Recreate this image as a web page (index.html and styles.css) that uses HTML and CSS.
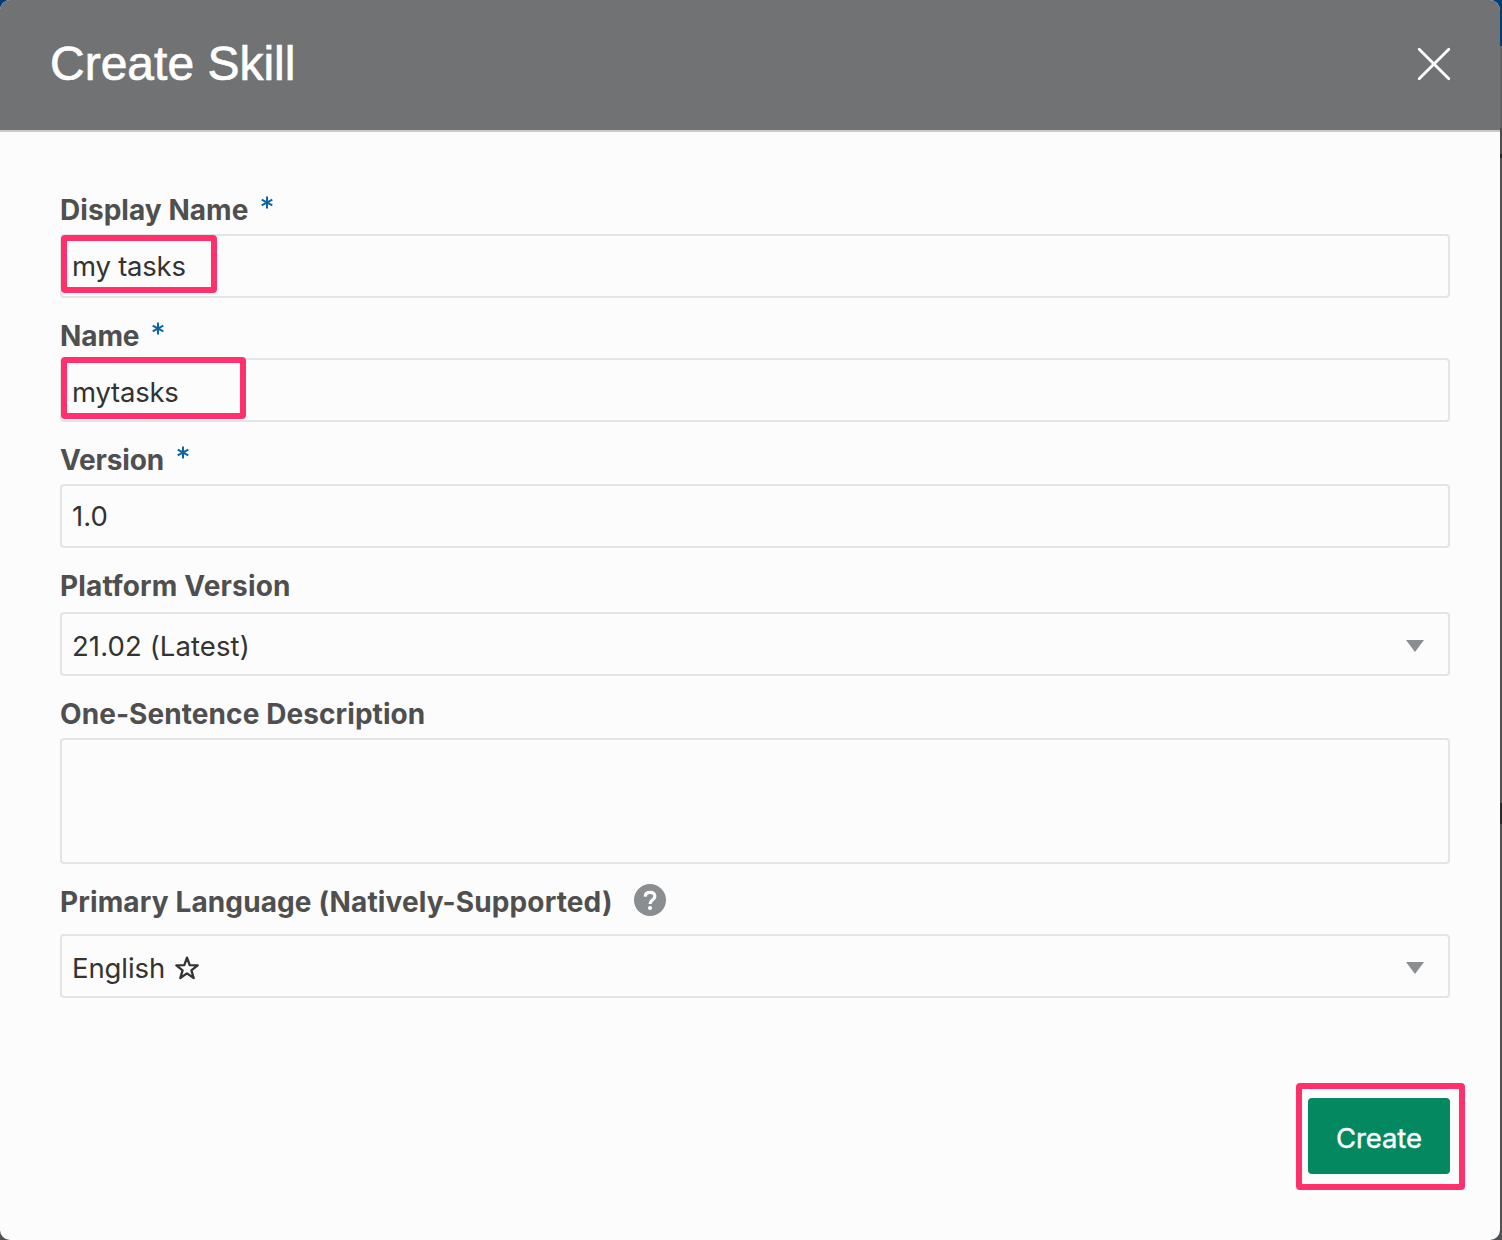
FILE: index.html
```html
<!DOCTYPE html>
<html lang="en">
<head>
<meta charset="utf-8">
<title>Create Skill</title>
<link rel="stylesheet" href="styles.css">
</head>
<body>
<main class="dialog">
  <header class="dialog-header">
    <h1 class="dialog-title">Create Skill</h1>
    <svg class="close" viewBox="0 0 36 36" role="img" aria-label="Close"><path d="M3.2 3.2 32.8 32.8M32.8 3.2 3.2 32.8"/></svg>
  </header>
  <form class="form">
    <section class="field field-display">
      <div class="label"><span class="t-display">Display Name</span><svg class="req" viewBox="0 0 12 13"><path d="M6 .5v12M.7 3.6l10.6 5.8M11.3 3.6.7 9.4"/></svg></div>
      <div class="control"><span class="t-tasks">my tasks</span><i class="mark mark-display"></i></div>
    </section>
    <section class="field field-name">
      <div class="label"><span class="t-name">Name</span><svg class="req" viewBox="0 0 12 13"><path d="M6 .5v12M.7 3.6l10.6 5.8M11.3 3.6.7 9.4"/></svg></div>
      <div class="control low"><span class="t-tasks">mytasks</span><i class="mark mark-name"></i></div>
    </section>
    <section class="field field-version">
      <div class="label"><span class="t-version">Version</span><svg class="req" viewBox="0 0 12 13"><path d="M6 .5v12M.7 3.6l10.6 5.8M11.3 3.6.7 9.4"/></svg></div>
      <div class="control"><span>1.0</span></div>
    </section>
    <section class="field field-platform">
      <div class="label"><span class="t-platform">Platform Version</span></div>
      <div class="control low"><span class="t-latest">21.02 (Latest)</span><svg class="arrow" viewBox="0 0 18 12"><path d="M0 0h18L9 12z"/></svg></div>
    </section>
    <section class="field field-description">
      <div class="label"><span class="t-description">One-Sentence Description</span></div>
      <div class="control tall"></div>
    </section>
    <section class="field field-language">
      <div class="label"><span class="t-language">Primary Language (Natively-Supported)</span><span class="help"><svg viewBox="0 0 32 32"><circle class="help-disc" cx="16" cy="16" r="16"/><path class="help-hook" d="M11.2 12.6c.1-2.7 2-4.2 4.8-4.2s4.8 1.5 4.8 4c0 3.4-4.7 3.4-4.7 7.6"/><circle class="help-dot" cx="16" cy="24" r="2"/></svg></span></div>
      <div class="control low"><span class="t-english">English</span><svg class="star" viewBox="0 0 26 26"><path d="M13 2.7l2.7 7.5 8 .2-6.3 4.9 2.3 7.7-6.7-4.6L6.3 23l2.3-7.7-6.3-4.9 8-.2z"/></svg><svg class="arrow" viewBox="0 0 18 12"><path d="M0 0h18L9 12z"/></svg></div>
    </section>
  </form>
  <footer class="footer">
    <div class="create-mark"><button class="create" type="button">Create</button></div>
  </footer>
</main>
<div class="backdrop"></div>
</body>
</html>
```

FILE: styles.css
```css
* { box-sizing: border-box; }
body {
  margin: 0;
  width: 1502px;
  height: 1240px;
  overflow: hidden;
  display: flex;
  background: linear-gradient(#003d70 0 46px, #505153 46px);
  font-family: Inter, "Liberation Sans", sans-serif;
}
.dialog {
  width: 1500px;
  height: 1240px;
  flex: none;
  display: flex;
  flex-direction: column;
  overflow: hidden;
  background: #fcfcfc;
  border-radius: 10px;
}
.backdrop {
  width: 2px;
  background: linear-gradient(#003d70 0 46px, #626365 46px 128px, #4a4b4d 128px 154px, #252628 154px 158px, #505153 158px 803px, #28292b 803px 824px, #505153 824px);
}
.dialog-header {
  height: 132px;
  flex: none;
  display: flex;
  align-items: center;
  justify-content: space-between;
  padding: 0 50px 3px 50px;
  background: #717274;
  border-bottom: 2px solid #c8c9cb;
}
.dialog-title {
  margin: 0;
  color: #fff;
  font: 400 48px/56px "Liberation Sans", Arial, sans-serif;
  -webkit-text-stroke: 0.7px #fff;
}
.close {
  width: 36px;
  height: 36px;
  margin-right: -2px;
  fill: none;
  stroke: #fff;
  stroke-width: 2.8;
  stroke-linecap: round;
}
.form { padding: 40px 50px 0 60px; }
.field { display: flex; flex-direction: column; }
.label {
  display: flex;
  align-items: center;
  height: 58px;
  padding-top: 18px;
  color: #4f4f4f;
  font-size: 28px;
  font-weight: 700;
  line-height: 40px;
  white-space: nowrap;
}
.t-display { letter-spacing: 0.05px; }
.t-name { letter-spacing: -0.1px; }
.t-version { letter-spacing: -0.17px; }
.t-platform { letter-spacing: 0.16px; }
.t-description { letter-spacing: 0.08px; }
.t-language { letter-spacing: 0.12px; }
.t-tasks { letter-spacing: -0.23px; }
.t-latest { letter-spacing: 0.1px; }
.t-english { letter-spacing: -0.1px; }
.field-display .control, .field-version .control, .field-description .control { margin-top: 4px; }
.field-name .control { margin-top: 2px; }
.field-platform .control { margin-top: 6px; }
.field-language .control { margin-top: 12px; }
.req {
  width: 12px;
  height: 13px;
  margin: -16px 0 0 13px;
  fill: none;
  stroke: #0b64a4;
  stroke-width: 2;
}
.control {
  position: relative;
  display: flex;
  align-items: center;
  width: 1390px;
  height: 64px;
  padding: 0 24px 0 10px;
  border: 2px solid #e4e4e4;
  border-radius: 4px;
  color: #333;
  font-size: 27.5px;
  line-height: 40px;
  white-space: nowrap;
}
.low { padding-top: 4px; }
.tall { height: 126px; }
.mark {
  position: absolute;
  left: -1px;
  border: 6px solid #ff306c;
  border-radius: 4px;
}
.mark-display { top: -1px; width: 155.5px; height: 58px; }
.mark-name { top: -3px; width: 184.5px; height: 62px; }
.arrow {
  width: 18px;
  height: 12px;
  margin: -1px 0 0 auto;
  fill: #8b8e90;
}
.star {
  width: 26px;
  height: 26px;
  margin-left: 9px;
  fill: none;
  stroke: #333;
  stroke-width: 2.3;
  stroke-linejoin: round;
}
.help {
  display: flex;
  width: 32px;
  height: 32px;
  margin: -4px 0 0 21px;
}
.help-disc { fill: #8b8e90; }
.help-hook { fill: none; stroke: #fff; stroke-width: 3.2; }
.help-dot { fill: #fff; }
.footer {
  display: flex;
  justify-content: flex-end;
  margin-top: 85px;
  padding-right: 35px;
}
.create-mark {
  width: 169px;
  height: 107px;
  padding: 9px 6px;
  border: 6px solid #ff306c;
  border-radius: 4px;
}
.create {
  width: 142px;
  height: 76px;
  padding: 4px 0 0;
  border: 0;
  border-radius: 4px;
  background: #04885f;
  color: #fff;
  font: 400 27.5px/40px Inter, "Liberation Sans", sans-serif;
  letter-spacing: -0.1px;
  -webkit-text-stroke: 0.4px #fff;
}
```
